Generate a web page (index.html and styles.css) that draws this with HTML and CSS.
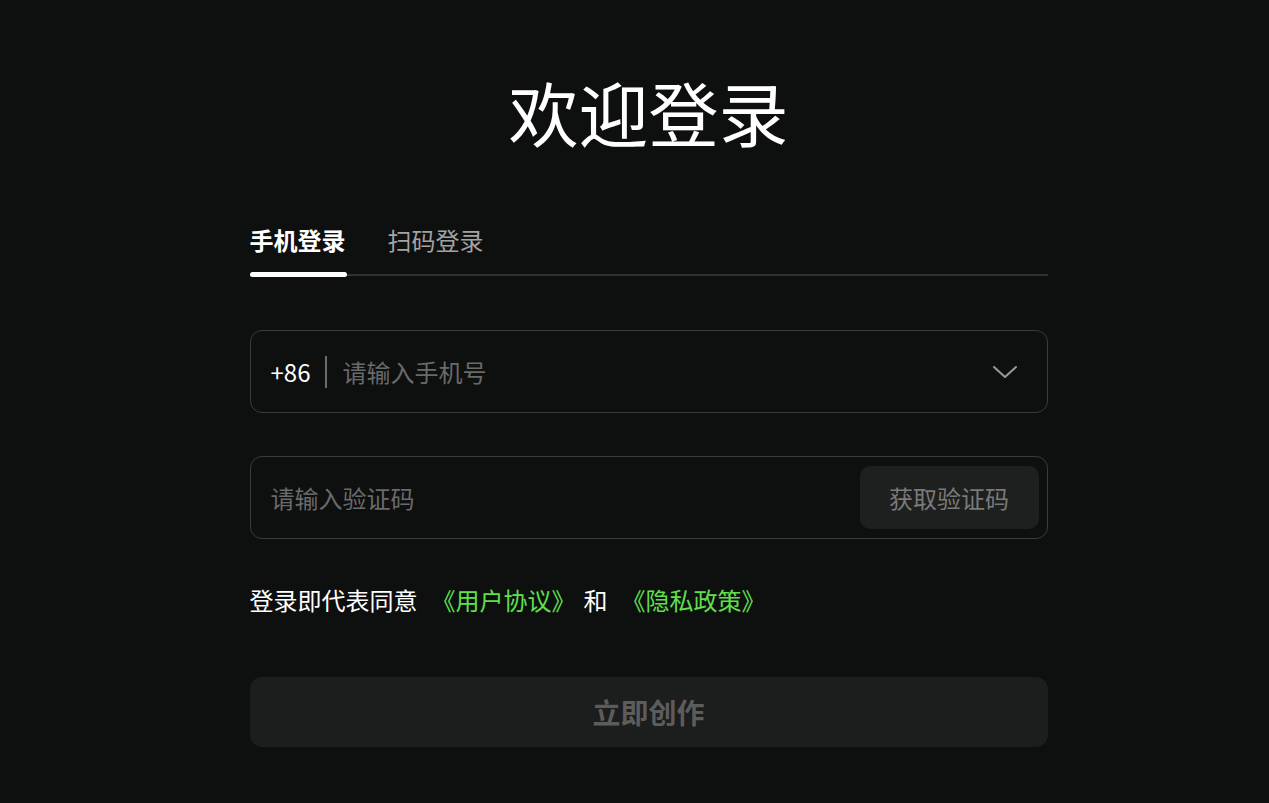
FILE: index.html
```html
<!DOCTYPE html>
<html lang="zh-CN">
<head>
  <meta charset="UTF-8">
  <meta name="viewport" content="width=device-width, initial-scale=1.0">
  <title>欢迎登录</title>
  <link rel="stylesheet" href="styles.css">
</head>
<body>

<div class="login">
  <h1 class="title">欢迎登录</h1>

  <div class="tabs">
    <div class="tab active">手机登录</div>
    <div class="tab">扫码登录</div>
  </div>

  <form class="login-form">
    <div class="field">
      <span class="prefix">+86</span>
      <span class="divider"></span>
      <input type="text" class="field-input" placeholder="请输入手机号">
      <svg class="chevron" width="26" height="16" viewBox="0 0 26 16">
        <path d="M2 3 L13 13 L24 3" fill="none" stroke="#9a9a9a" stroke-width="2" stroke-linecap="round" stroke-linejoin="round"/>
      </svg>
    </div>

    <div class="field code-field">
      <input type="text" class="field-input" placeholder="请输入验证码">
      <button type="button" class="code-btn">获取验证码</button>
    </div>

    <p class="agree">
      登录即代表同意<a href="#">《用户协议》</a>和<a href="#">《隐私政策》</a>
    </p>

    <button type="submit" class="submit-btn">立即创作</button>
  </form>
</div>

</body>
</html>
```

FILE: styles.css
```css
body {
  margin: 0;
  padding: 0 0 0 28px;
  background-color: #0e0f0f;
  color: #fff;
  font-family: "Noto Sans CJK SC", "Noto Sans", sans-serif;
}
.login {
  width: 798px;
  margin: 0 auto;
  padding-top: 61px;
}
.title {
  margin: 0;
  text-align: center;
  font-size: 70px;
  font-weight: 400;
  line-height: 102px;
  color: #fff;
}
.tabs {
  display: flex;
  gap: 42px;
  margin-top: 60px;
  border-bottom: 2px solid #303131;
}
.tab {
  position: relative;
  font-size: 24px;
  line-height: 34px;
  padding-bottom: 17px;
  color: #a3a3a3;
}
.tab.active {
  color: #fff;
  font-weight: 700;
}
.tab.active::after {
  content: "";
  position: absolute;
  left: 0;
  right: -1px;
  bottom: -3px;
  height: 5px;
  border-radius: 3px;
  background: #fff;
}
.login-form {
  margin-top: 54px;
}
.field {
  display: flex;
  align-items: center;
  height: 81px;
  padding: 0 8px 0 20px;
  border: 1px solid #3a3b3b;
  border-radius: 12px;
  margin-bottom: 43px;
}
.prefix {
  font-size: 24px;
  color: #fff;
}
.divider {
  width: 2px;
  height: 32px;
  background: #6a6a6a;
  margin: 0 15px 0 15px;
}
.field-input {
  flex: 1;
  min-width: 0;
  background: transparent;
  border: none;
  outline: none;
  color: #fff;
  font-family: inherit;
  font-size: 24px;
  padding: 0;
}
.field-input::placeholder {
  color: #6a6a6a;
}
.chevron {
  margin-right: 21px;
}
.code-btn {
  width: 179px;
  height: 63px;
  border: none;
  border-radius: 10px;
  background: #1e1f1f;
  color: #7a7a7a;
  font-family: inherit;
  font-size: 24px;
}
.agree {
  margin: 44px 0 0;
  font-size: 24px;
  line-height: 34px;
  color: #fff;
}
.agree a {
  color: #5fe04b;
  text-decoration: none;
  margin: 0 8px 0 14px;
}
.submit-btn {
  display: block;
  width: 100%;
  height: 70px;
  margin-top: 60px;
  border: none;
  border-radius: 12px;
  background: #1c1d1d;
  color: #5c5c5c;
  font-family: inherit;
  font-size: 28px;
  font-weight: 700;
}
```
